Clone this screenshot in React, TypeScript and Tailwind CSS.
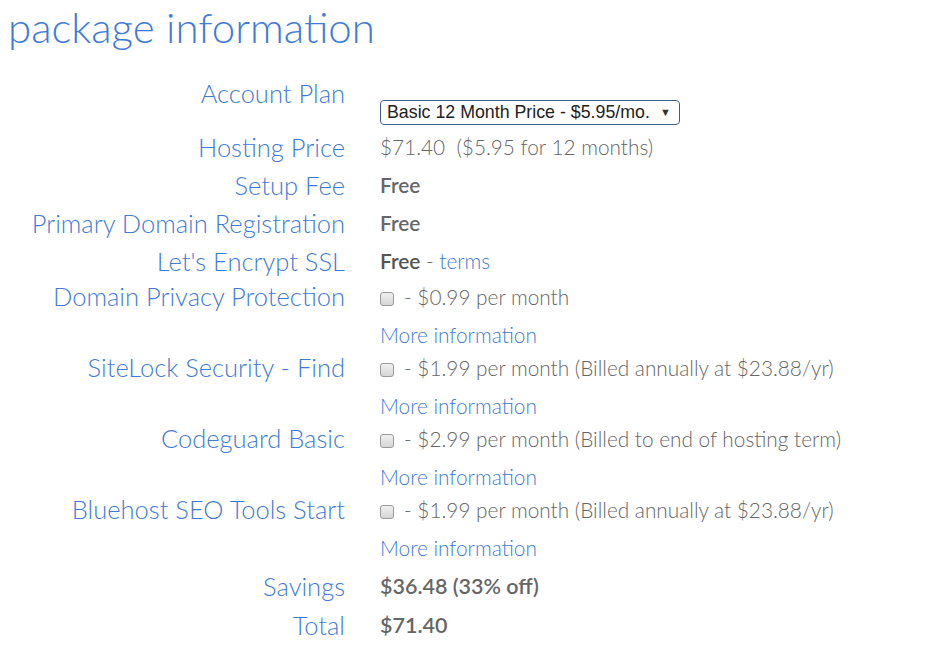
import React from "react";

const label = "text-right text-[#3f7bd6] font-light text-[25.5px]";
const value = "text-[#666] font-light text-[20.8px]";

function Box() {
  return (
    <span className="inline-block w-[14px] h-[14px] rounded-[3px] border border-[#9a9a9a] bg-gradient-to-b from-[#f0f0f0] to-[#d6d6d6] mr-[10px] align-[-1px]" />
  );
}

function AddOn({ name, text }: { name: string; text: string }) {
  return (
    <>
      <div className={label + " leading-[33px]"}>{name}</div>
      <div className={value}>
        <div className="leading-[33px]">
          <Box />- {text}
        </div>
        <div className="leading-[33px] pt-[5px] text-[#3f7bd6]">More information</div>
      </div>
    </>
  );
}

export default function App() {
  return (
    <div className="bg-white min-h-[664px] w-[926px]" style={{ fontFamily: "Lato, 'Open Sans', sans-serif" }}>
      <h1 className="pl-[8px] text-[42px] leading-[52px] pt-[1px] font-light text-[#3f7bd6]">package information</h1>
      <div className="grid grid-cols-[345px_1fr] gap-x-[35px] mt-[21px]">
        <div className={label + " leading-[38px] h-[54px]"}>Account Plan</div>
        <div className="h-[54px] pt-[26px]">
          <div
            className="inline-flex items-center gap-[10px] h-[25px] w-[300px] border border-[#3b5f94] rounded-[4px] px-[6px] text-[17.8px] text-[#222]"
            style={{ fontFamily: "'Liberation Sans', Arial, sans-serif" }}
          >
            <span>Basic 12 Month Price - $5.95/mo.</span>
            <span className="text-[11px] text-[#333]">▼</span>
          </div>
        </div>

        <div className={label + " leading-[38px]"}>Hosting Price</div>
        <div className={value + " leading-[38px]"}>$71.40&nbsp; ($5.95 for 12 months)</div>

        <div className={label + " leading-[38px]"}>Setup Fee</div>
        <div className={value + " leading-[38px] font-semibold text-[#555]"}>Free</div>

        <div className={label + " leading-[38px]"}>Primary Domain Registration</div>
        <div className={value + " leading-[38px] font-semibold text-[#555]"}>Free</div>

        <div className={label + " leading-[38px]"}>Let's Encrypt SSL</div>
        <div className={value + " leading-[38px]"}>
          <span className="font-semibold text-[#555]">Free</span> - <span className="text-[#3f7bd6]">terms</span>
        </div>

        <AddOn name="Domain Privacy Protection" text="$0.99 per month" />
        <AddOn name="SiteLock Security - Find" text="$1.99 per month (Billed annually at $23.88/yr)" />
        <AddOn name="Codeguard Basic" text="$2.99 per month (Billed to end of hosting term)" />
        <AddOn name="Bluehost SEO Tools Start" text="$1.99 per month (Billed annually at $23.88/yr)" />

        <div className={label + " leading-[40px] pt-[2px]"}>Savings</div>
        <div className={value + " leading-[40px] pt-[2px] text-[21.5px] font-semibold text-[#555]"}>$36.48 (33% off)</div>

        <div className={label + " leading-[38px]"}>Total</div>
        <div className={value + " leading-[38px] text-[21.5px] font-semibold text-[#555]"}>$71.40</div>
      </div>
    </div>
  );
}
